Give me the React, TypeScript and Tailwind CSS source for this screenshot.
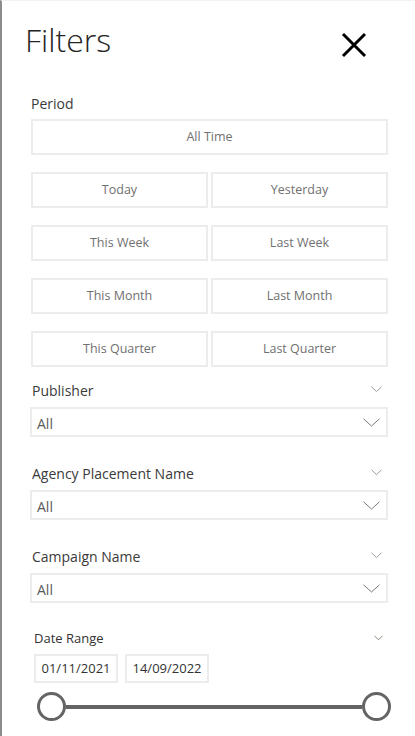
import React from "react";

const font = { fontFamily: '"Open Sans", "Noto Sans", sans-serif' };

function SmallChevron() {
  return (
    <svg width="11" height="7" viewBox="0 0 11 7" className="block">
      <path d="M0.5 0.8 L5.5 5.6 L10.5 0.8" fill="none" stroke="#9a9a9a" strokeWidth="1" />
    </svg>
  );
}

function BigChevron() {
  return (
    <svg width="17" height="9" viewBox="0 0 17 9" className="block">
      <path d="M0.5 0.8 L8.5 8 L16.5 0.8" fill="none" stroke="#7a7a7a" strokeWidth="1" />
    </svg>
  );
}

function PeriodButton({ label }: { label: string }) {
  return (
    <div className="h-[36px] border-2 border-[#ececec] flex items-center justify-center text-[12.5px] text-[#707070]">
      <span className="mt-[1px]">{label}</span>
    </div>
  );
}

function Dropdown({ label }: { label: string }) {
  return (
    <div className="flex flex-col">
      <div className="h-[20px] flex items-center justify-between pl-[2px] pr-[6px]">
        <span className="text-[14px] leading-[20px] text-[#3a3a3a] mt-[3px]">{label}</span>
        <SmallChevron />
      </div>
      <div className="mt-[8px] h-[30px] border-2 border-[#ececec] flex items-center justify-between pl-[5px] pr-[6px]">
        <span className="text-[14px] text-[#5a5a5a] mt-[2px]">All</span>
        <BigChevron />
      </div>
    </div>
  );
}

export default function App() {
  const rows: [string, string][] = [
    ["Today", "Yesterday"],
    ["This Week", "Last Week"],
    ["This Month", "Last Month"],
    ["This Quarter", "Last Quarter"],
  ];
  return (
    <div
      className="w-[415px] h-[736px] bg-white border-l-2 border-[#8c8c8c] border-t border-t-[#f2f2f2] overflow-hidden flex flex-col"
      style={font}
    >
      <div className="pt-[19px] h-[59px] flex items-center justify-between pl-[23px] pr-[48px]">
        <span className="text-[32px] leading-[40px] font-light text-[#252423]">Filters</span>
        <svg width="26" height="26" viewBox="0 0 26 26" className="block mt-[9px]">
          <path d="M2 2 L24 24 M24 2 L2 24" stroke="#000" strokeWidth="3" />
        </svg>
      </div>

      <div className="pl-[29px] pr-[27px] flex flex-col">
        <div className="mt-[32px] h-[20px] text-[14px] leading-[20px] text-[#3a3a3a]">
          <span className="relative top-[2px]">Period</span>
        </div>
        <div className="mt-[7px]">
          <PeriodButton label="All Time" />
        </div>
        <div className="mt-[17px] flex flex-col gap-[17px]">
          {rows.map(([a, b]) => (
            <div key={a} className="grid grid-cols-2 gap-[3px]">
              <PeriodButton label={a} />
              <PeriodButton label={b} />
            </div>
          ))}
        </div>

        <div className="mt-[12px] flex flex-col gap-[25px] -ml-[1px]">
          <Dropdown label="Publisher" />
          <Dropdown label="Agency Placement Name" />
          <Dropdown label="Campaign Name" />
        </div>

        <div className="mt-[25px] flex flex-col">
          <div className="h-[20px] flex items-center justify-between pl-[3px] pr-[5px]">
            <span className="text-[13px] leading-[20px] text-[#333]">Date Range</span>
            <svg width="9" height="6" viewBox="0 0 9 6" className="block">
              <path d="M0.5 0.8 L4.5 4.8 L8.5 0.8" fill="none" stroke="#8a8a80" strokeWidth="1" />
            </svg>
          </div>
          <div className="mt-[6px] flex gap-[7px] pl-[3px]">
            <div className="w-[84px] h-[29px] border-2 border-[#ececec] flex items-center justify-center text-[13px] text-[#333]">
              01/11/2021
            </div>
            <div className="w-[84px] h-[29px] border-2 border-[#ececec] flex items-center justify-center text-[13px] text-[#333]">
              14/09/2022
            </div>
          </div>
          <div className="mt-[9px] flex items-center ml-[6px] -mr-[3px]">
            <div className="w-[29px] h-[29px] rounded-full border-[3px] border-[#646464] bg-white shrink-0" />
            <div className="flex-1 h-[4px] bg-[#646464]" />
            <div className="w-[29px] h-[29px] rounded-full border-[3px] border-[#646464] bg-white shrink-0" />
          </div>
        </div>
      </div>
    </div>
  );
}
